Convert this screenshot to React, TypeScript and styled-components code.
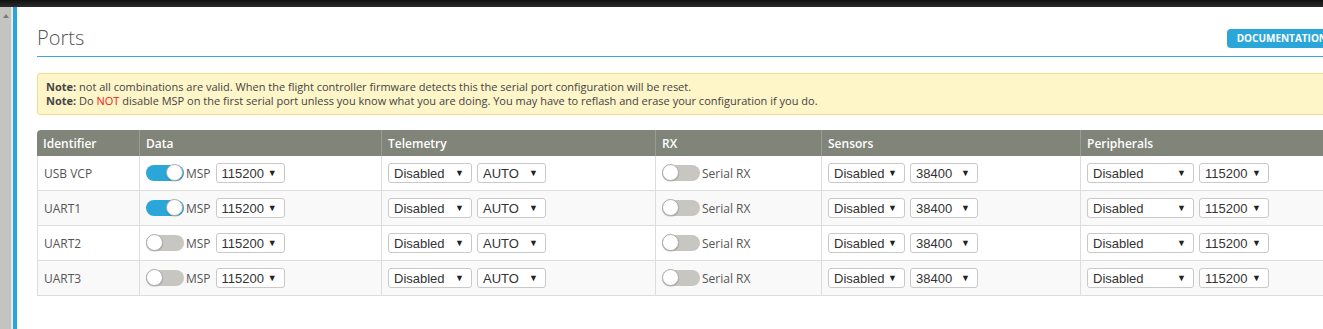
import React from "react";
import styled, { createGlobalStyle } from "styled-components";

const GlobalStyle = createGlobalStyle`
  html, body {
    margin: 0;
    padding: 0;
    background: #fff;
    overflow: hidden;
  }
  body {
    font-family: "Open Sans", "Liberation Sans", sans-serif;
    color: #555;
  }
`;

const Page = styled.div`
  width: 1323px;
  height: 329px;
  display: flex;
  flex-direction: column;
  overflow: hidden;
`;

const TopBar = styled.div`
  height: 7px;
  flex-shrink: 0;
  background: linear-gradient(#111, #2a2a2a);
`;

const Main = styled.div`
  flex: 1;
  display: flex;
  min-height: 0;
`;

const Scrollbar = styled.div`
  width: 11px;
  background: #c4c3bf;
  display: flex;
  justify-content: center;
  padding-top: 7px;
  box-sizing: border-box;
  flex-shrink: 0;
`;

const ScrollArrow = styled.div`
  width: 0;
  height: 0;
  border-left: 3px solid transparent;
  border-right: 3px solid transparent;
  border-bottom: 4px solid #7b7b7b;
`;

const Gutter = styled.div`
  width: 2px;
  background: #e9e9e9;
  flex-shrink: 0;
`;

const AccentBar = styled.div`
  width: 4px;
  background: #2ba6d8;
  flex-shrink: 0;
`;

const Content = styled.div`
  padding-left: 20px;
  width: 1320px;
  flex-shrink: 0;
  box-sizing: border-box;
`;

const Header = styled.div`
  display: flex;
  justify-content: space-between;
  align-items: flex-start;
  border-bottom: 1px solid #37a8db;
  height: 50px;
  box-sizing: border-box;
`;

const Title = styled.h1`
  margin: 19px 0 0;
  font-size: 20px;
  font-weight: 300;
  line-height: 24px;
  color: #555;
`;

const DocButton = styled.a`
  margin-top: 22px;
  background: #2ba6d8;
  color: #fff;
  font-size: 10px;
  font-weight: 700;
  line-height: 19px;
  height: 19px;
  padding: 0 10px;
  border-radius: 4px;
  text-transform: uppercase;
  white-space: nowrap;
`;

const NoteBox = styled.div`
  margin-top: 16px;
  background: #fef5c9;
  border: 1px solid #f1dd8b;
  border-radius: 3px;
  padding: 6px 8px;
  font-size: 11px;
  line-height: 14px;
  color: #444;
`;

const Strong = styled.strong`
  font-weight: 700;
`;

const Danger = styled.span`
  color: #e22;
`;

const Table = styled.table`
  margin-top: 15px;
  width: 1300px;
  border-collapse: separate;
  border-spacing: 0;
  table-layout: fixed;
  font-size: 12px;
`;

const Th = styled.th<{ $w: number }>`
  width: ${(p) => p.$w}px;
  background: #818478;
  color: #fff;
  font-weight: 600;
  text-align: left;
  height: 26px;
  padding: 0 6px;
  box-sizing: border-box;
  border-left: 1px solid #9a9c92;
  &:first-child {
    border-left: none;
    border-top-left-radius: 4px;
  }
`;

const Tr = styled.tr`
  &:nth-child(even) td {
    background: #f9f9f9;
  }
`;

const Td = styled.td`
  height: 35px;
  padding: 0 6px;
  box-sizing: border-box;
  border-left: 1px solid #ddd;
  border-bottom: 1px solid #ddd;
  background: #fff;
  color: #555;
  vertical-align: middle;
`;

const Cell = styled.div`
  display: flex;
  align-items: center;
  gap: 5px;
`;

const ToggleGroup = styled.div`
  display: flex;
  align-items: center;
  gap: 2px;
`;

const Track = styled.span<{ $on: boolean }>`
  position: relative;
  width: 38px;
  height: 16px;
  border-radius: 8px;
  background: ${(p) => (p.$on ? "#2ba6d8" : "#c8c6c0")};
  display: inline-block;
`;

const Knob = styled.span<{ $on: boolean }>`
  position: absolute;
  top: -1px;
  left: ${(p) => (p.$on ? "20px" : "0")};
  width: 17px;
  height: 17px;
  border-radius: 50%;
  background: #fff;
  box-sizing: border-box;
  border: 1px solid #aaa;
  box-shadow: 0 1px 1px rgba(0, 0, 0, 0.15);
`;

const ToggleLabel = styled.span`
  font-size: 12px;
  color: #555;
`;

const Select = styled.div<{ $w: number }>`
  width: ${(p) => p.$w}px;
  height: 20px;
  box-sizing: border-box;
  border: 1px solid #c9c9c9;
  border-radius: 3px;
  background: #fff;
  display: flex;
  align-items: center;
  justify-content: space-between;
  padding: 0 7px 0 5px;
  font-family: "Liberation Sans", Arial, sans-serif;
  font-size: 13px;
  color: #333;
`;

const Arrow = styled.span`
  font-size: 9px;
  color: #222;
`;

function Toggle({ on, label }: { on: boolean; label: string }) {
  return (
    <ToggleGroup>
      <Track $on={on}>
        <Knob $on={on} />
      </Track>
      <ToggleLabel>{label}</ToggleLabel>
    </ToggleGroup>
  );
}

function Dropdown({ value, width }: { value: string; width: number }) {
  return (
    <Select $w={width}>
      <span>{value}</span>
      <Arrow>▼</Arrow>
    </Select>
  );
}

const columns = [
  { name: "Identifier", w: 102 },
  { name: "Data", w: 242 },
  { name: "Telemetry", w: 274 },
  { name: "RX", w: 166 },
  { name: "Sensors", w: 259 },
  { name: "Peripherals", w: 257 },
];

const ports = [
  { id: "USB VCP", msp: true },
  { id: "UART1", msp: true },
  { id: "UART2", msp: false },
  { id: "UART3", msp: false },
];

export default function App() {
  return (
    <Page>
      <GlobalStyle />
      <TopBar />
      <Main>
        <Scrollbar>
          <ScrollArrow />
        </Scrollbar>
        <Gutter />
        <AccentBar />
        <Content>
          <Header>
            <Title>Ports</Title>
            <DocButton>Documentation</DocButton>
          </Header>
          <NoteBox>
            <div>
              <Strong>Note:</Strong> not all combinations are valid. When the flight
              controller firmware detects this the serial port configuration will be reset.
            </div>
            <div>
              <Strong>Note:</Strong> Do <Danger>NOT</Danger> disable MSP on the first
              serial port unless you know what you are doing. You may have to reflash and
              erase your configuration if you do.
            </div>
          </NoteBox>
          <Table>
            <thead>
              <tr>
                {columns.map((c) => (
                  <Th key={c.name} $w={c.w}>
                    {c.name}
                  </Th>
                ))}
              </tr>
            </thead>
            <tbody>
              {ports.map((p) => (
                <Tr key={p.id}>
                  <Td>{p.id}</Td>
                  <Td>
                    <Cell>
                      <Toggle on={p.msp} label="MSP" />
                      <Dropdown value="115200" width={69} />
                    </Cell>
                  </Td>
                  <Td>
                    <Cell>
                      <Dropdown value="Disabled" width={84} />
                      <Dropdown value="AUTO" width={69} />
                    </Cell>
                  </Td>
                  <Td>
                    <Cell>
                      <Toggle on={false} label="Serial RX" />
                    </Cell>
                  </Td>
                  <Td>
                    <Cell>
                      <Dropdown value="Disabled" width={77} />
                      <Dropdown value="38400" width={68} />
                    </Cell>
                  </Td>
                  <Td>
                    <Cell>
                      <Dropdown value="Disabled" width={107} />
                      <Dropdown value="115200" width={70} />
                    </Cell>
                  </Td>
                </Tr>
              ))}
            </tbody>
          </Table>
        </Content>
      </Main>
    </Page>
  );
}
